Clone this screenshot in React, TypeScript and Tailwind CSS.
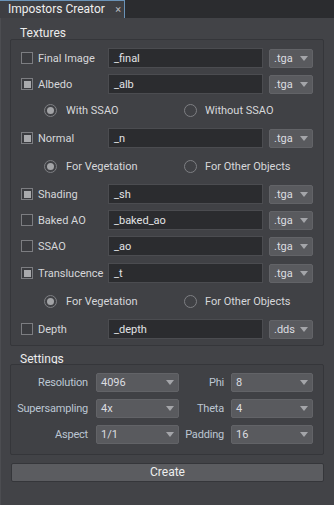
import React from 'react'

const font = { fontFamily: 'Roboto, "Noto Sans", sans-serif' }

function Check({ checked }: { checked?: boolean }) {
  return (
    <div className="w-[12px] h-[12px] border border-[#7c7d81] bg-[#3b3c40] flex items-center justify-center shrink-0">
      {checked && <div className="w-[7px] h-[7px] bg-[#a9aaad]" />}
    </div>
  )
}

function Radio({ checked }: { checked?: boolean }) {
  return (
    <div className="w-[13px] h-[13px] rounded-full border-[1.5px] border-[#7e7f83] flex items-center justify-center shrink-0">
      {checked && <div className="w-[7px] h-[7px] rounded-full bg-[#a3a4a7]" />}
    </div>
  )
}

function Arrow() {
  return (
    <svg width="8" height="5" viewBox="0 0 8 5" className="shrink-0">
      <path d="M0 0 L8 0 L4 5 Z" fill="#a4a5a9" />
    </svg>
  )
}

function Drop({ value, className }: { value: string; className: string }) {
  return (
    <div className={`h-[19px] bg-[#595a5e] border border-[#626367] rounded-[2px] flex items-center justify-between pl-[4px] pr-[4px] text-[#dcdde0] ${className}`}>
      <span>{value}</span>
      <Arrow />
    </div>
  )
}

function TexRow({ label, value, ext, checked, h }: { label: string; value: string; ext: string; checked?: boolean; h: string }) {
  return (
    <div className={`flex items-center pl-[10px] pr-[9px] ${h}`}>
      <div className="w-[87px] flex items-center gap-[5px] text-[#d6d7da]">
        <Check checked={checked} />
        <span>{label}</span>
      </div>
      <div className="w-[155px] h-[20px] bg-[#2b2c2f] border border-[#4b4c50] flex items-center pl-[5px] text-[#e2e3e5]">{value}</div>
      <Drop value={ext} className="ml-[6px] w-[44px]" />
    </div>
  )
}

function RadioRow({ a, b, h }: { a: string; b: string; h: string }) {
  return (
    <div className={`flex items-center pl-[33px] ${h} text-[#d6d7da]`}>
      <div className="w-[140px] flex items-center gap-[9px]">
        <Radio checked />
        <span>{a}</span>
      </div>
      <div className="flex items-center gap-[8px]">
        <Radio />
        <span>{b}</span>
      </div>
    </div>
  )
}

const SETTINGS = [
  ['Resolution', '4096', 'Phi', '8'],
  ['Supersampling', '4x', 'Theta', '4'],
  ['Aspect', '1/1', 'Padding', '16'],
]

export default function App() {
  return (
    <div className="w-[334px] h-[505px] bg-[#2b2c2f] flex flex-col text-[11px] leading-[13px]" style={font}>
      <div className="h-[18px] flex shrink-0">
        <div className="w-[125px] bg-[#3e3f43] border-t border-r border-[#6a93b8] flex items-center justify-between pl-[8px] pr-[3px] text-[#eeeeee] text-[12px]">
          <span>Impostors Creator</span>
          <span className="text-[#b8b9bc] text-[11px]">×</span>
        </div>
      </div>
      <div className="flex-1 bg-[#424347] border-l border-[#4c4d51] pl-[9px] pr-[10px] flex flex-col">
        <div className="h-[21px] pt-[10px] pl-[10px] leading-[11px] text-[#ececec] text-[12px]">Textures</div>
        <div className="h-[307px] border border-[#35363a] rounded-[2px] bg-[#404145] pt-[5px] flex flex-col">
          <TexRow label="Final Image" value="_final" ext=".tga" h="h-[26px]" />
          <TexRow label="Albedo" value="_alb" ext=".tga" checked h="h-[26px]" />
          <RadioRow a="With SSAO" b="Without SSAO" h="h-[27px]" />
          <TexRow label="Normal" value="_n" ext=".tga" checked h="h-[28px]" />
          <RadioRow a="For Vegetation" b="For Other Objects" h="h-[29px]" />
          <TexRow label="Shading" value="_sh" ext=".tga" checked h="h-[26px]" />
          <TexRow label="Baked AO" value="_baked_ao" ext=".tga" h="h-[26px]" />
          <TexRow label="SSAO" value="_ao" ext=".tga" h="h-[26px]" />
          <TexRow label="Translucence" value="_t" ext=".tga" checked h="h-[28px]" />
          <RadioRow a="For Vegetation" b="For Other Objects" h="h-[29px]" />
          <TexRow label="Depth" value="_depth" ext=".dds" h="h-[26px]" />
        </div>
        <div className="h-[18px] pt-[8px] pl-[10px] leading-[11px] text-[#ececec] text-[12px]">Settings</div>
        <div className="h-[91px] border border-[#35363a] rounded-[2px] bg-[#404145] pt-[8px] pr-[9px] flex flex-col gap-[7px]">
          {SETTINGS.map(([l1, v1, l2, v2]) => (
            <div key={l1} className="flex items-center h-[19px]">
              <div className="w-[77px] text-right text-[#bcc6d3] tracking-[-0.2px]">{l1}</div>
              <Drop value={v1} className="ml-[8px] w-[83px]" />
              <div className="w-[45px] text-right text-[#bcc6d3] tracking-[-0.2px]">{l2}</div>
              <Drop value={v2} className="ml-[7px] w-[82px]" />
            </div>
          ))}
        </div>
        <div className="mt-[8px] ml-[1px] h-[19px] bg-[#5b5c60] border border-[#35363a] rounded-[2px] flex items-center justify-center text-[#eeeeee] text-[12px]">Create</div>
      </div>
    </div>
  )
}
